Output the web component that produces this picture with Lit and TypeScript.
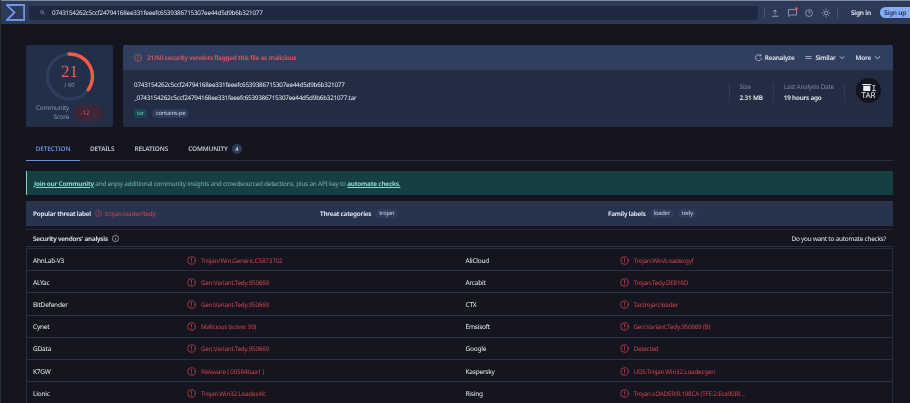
import { LitElement, html, css, svg } from "lit";
import { customElement } from "lit/decorators.js";

const HASH = "0743154262c5ccf24794168ee331feeefc6539386715307ee44d5d9b6b321077";
const ROWS: [string, string, string, string][] = [
  ["AhnLab-V3", "Trojan/Win.Generic.C5873702", "AliCloud", "Trojan:Win/Loader.gyf"],
  ["ALYac", "Gen:Variant.Tedy.950669", "Arcabit", "Trojan.Tedy.DE818D"],
  ["BitDefender", "Gen:Variant.Tedy.950669", "CTX", "Tar.trojan.loader"],
  ["Cynet", "Malicious (score: 99)", "Emsisoft", "Gen:Variant.Tedy.950669 (B)"],
  ["GData", "Gen:Variant.Tedy.950669", "Google", "Detected"],
  ["K7GW", "Riskware ( 00584baa1 )", "Kaspersky", "UDS:Trojan.Win32.Loader.gen"],
  ["Lionic", "Trojan.Win32.Loader.4!c", "Rising", "Trojan.LOADER!8.198CA (TFE:2:Eca90IR…"],
];

const alertIcon = (size: number) => html`<svg class="alert" width=${size} height=${size} viewBox="0 0 16 16" fill="none" stroke="currentColor" stroke-width="1.300" stroke-linecap="round"><circle cx="8" cy="8" r="6.800"/><path d="M8 4.200v4.600M8 11.400v.2"/></svg>`;
const chevron = svg`<path d="M1 1l3.500 3L8 1" fill="none" stroke="currentColor" stroke-width="1"/>`;

@customElement("app-root")
export class AppRoot extends LitElement {
  static styles = css`
    :host { display: block; width: 910px; height: 403px; overflow: hidden; background: #14151f; color: #e9ecf3; font-family: "Noto Sans", sans-serif; font-size: 6.400px; letter-spacing: -0.210px; text-rendering: geometricPrecision; filter: blur(0.3px); box-sizing: border-box; border-left: 1px solid #2a2d38; }
    * { box-sizing: border-box; }
    svg { display: block; flex: none; }
    .topbar { height: 24px; margin-left: -1px; background: #2c3a58; border-top: 1px solid #7f8aa3; display: flex; align-items: center; padding: 0 0 0 6px; }
    .logo { margin-right: 4px; color: #6f93e6; }
    .search { width: 729px; height: 14px; background: #1f2a42; border-radius: 2px; display: flex; align-items: center; padding-left: 11px; gap: 7px; color: #dde1ea; font-size: 6.300px; letter-spacing: -0.220px; }
    .search svg { color: #7e8aa5; }
    .tools { display: flex; align-items: center; flex: 1; color: #b9c2d6; }
    .sep { width: 1px; height: 10px; background: #46547a; }
    .tools .sep:first-child { margin-left: 6px; margin-right: 6px; }
    .ico { margin-right: 8px; position: relative; }
    .ico.comment { margin-left: 1px; }
    .ico.sun { margin-right: 6px; }
    .dot { position: absolute; top: -2px; right: -1px; width: 3.500px; height: 3.500px; border-radius: 50%; background: #e5484d; }
    .signin { margin-left: 13px; font-weight: 600; color: #eef0f6; font-size: 6.500px; }
    .signup { margin-left: auto; width: 30px; height: 11px; background: #86aef5; color: #1d2b4c; border-radius: 6px 0 0 6px; font-weight: 600; display: flex; align-items: center; justify-content: center; font-size: 6.500px; }
    .main { padding: 21px 17px 0 25px; }
    .summary { display: grid; grid-template-columns: 87px 1fr; gap: 10px; height: 82px; }
    .score { background: #232f48; border-radius: 2px; display: flex; flex-direction: column; align-items: center; padding-top: 7px; }
    .gauge { width: 50px; height: 50px; position: relative; }
    .gauge-text { position: absolute; inset: 0; display: flex; flex-direction: column; align-items: center; padding-top: 9.500px; letter-spacing: 0; }
    .num { font-family: "Liberation Serif", serif; font-size: 17px; line-height: 19px; color: #ee5f55; }
    .of { font-size: 5.800px; line-height: 8px; color: #8a94ab; }
    .community { display: flex; align-items: center; margin-top: 2px; gap: 5px; }
    .community-label { text-align: right; color: #8a94ab; line-height: 8.600px; }
    .vote { width: 29px; height: 16px; border-radius: 8px; background: #3d2636; color: #e2524f; display: flex; align-items: center; justify-content: center; gap: 5px; padding-left: 2px; }
    .vote svg { color: #6b4552; }
    .card { background: #222d44; border-radius: 2px; display: flex; flex-direction: column; }
    .card-head { height: 25px; background: #303f60; border-radius: 2px 2px 0 0; display: flex; align-items: center; padding: 0 12px 0 11px; color: #e05a55; font-weight: 600; }
    .card-head .msg { margin-left: 5px; flex: 1; }
    .action { display: flex; align-items: center; gap: 3px; color: #e6e9f1; font-weight: 600; margin-left: 11px; }
    .card-body { flex: 1; display: flex; align-items: flex-start; padding: 8px 12px 0 11px; }
    .names { flex: 1; display: flex; flex-direction: column; line-height: 13px; font-size: 6.300px; letter-spacing: -0.220px; }
    .tags { display: flex; gap: 5px; margin-top: 4.500px; }
    .tag { height: 9px; border-radius: 5px; padding: 0 4px; font-size: 5.800px; line-height: 9px; background: #2e3c5c; color: #d3d9e6; }
    .tag.teal { background: #17474a; color: #5fd0bf; padding: 0 3px; border-radius: 2px; }
    .meta { display: flex; margin-top: 5px; align-items: stretch; }
    .meta-col { border-left: 1px solid #2f3c58; padding: 0 10px; display: flex; flex-direction: column; gap: 2.500px; line-height: 8px; }
    .meta-col span:first-child { color: #7b86a0; }
    .meta-col span:last-child { font-weight: 600; color: #e9ecf3; }
    .meta-col.end { width: 1px; padding: 0; margin-right: 11px; }
    .tar { width: 25px; height: 25px; border-radius: 50%; background: #12141f; display: flex; flex-direction: column; align-items: center; color: #e9ecf3; letter-spacing: 0; }
    .tar svg { margin-top: 6px; }
    .tar span { font-size: 8px; line-height: 8px; margin-top: -0.500px; }
    .tabs { height: 34px; display: flex; align-items: stretch; border-bottom: 1px solid #2a2f42; color: #bfc6d6; font-weight: 600; font-size: 6.400px; letter-spacing: -0.100px; }
    .tab { display: flex; align-items: center; padding-top: 10px; margin-right: 20px; gap: 4px; }
    .tab.on { color: #6c8fdf; width: 54px; justify-content: center; margin-right: 10px; border-bottom: 1px solid #6c8fdf; margin-bottom: -1px; }
    .count { width: 10px; height: 10px; border-radius: 50%; background: #2e3c5c; font-size: 5.600px; display: flex; align-items: center; justify-content: center; color: #d3d9e6; }
    .banner { height: 24px; margin-top: 10px; background: #153f40; border-left: 1px solid #7fd6cb; display: flex; align-items: center; padding-left: 7px; color: #78b3ae; white-space: pre; }
    .banner b { color: #89dcd2; font-weight: 700; text-decoration: underline; }
    .threat { height: 25px; margin-top: 6px; background: #28344d; display: grid; grid-template-columns: 287px 288px 1fr; align-items: center; padding-left: 7px; }
    .threat > div { display: flex; align-items: center; gap: 4px; }
    .threat strong { font-weight: 600; color: #eef0f6; }
    .threat .red { color: #cf454f; display: flex; align-items: center; gap: 3px; }
    .pill { height: 9px; border-radius: 5px; padding: 0 4px; font-size: 5.800px; line-height: 9px; background: #2e3c5c; color: #d3d9e6; }
    .vendors-head { height: 18px; margin-top: 3px; border-top: 1px solid #262b3c; border-bottom: 1px solid #2a2f42; display: flex; align-items: center; padding: 0 7px; font-weight: 600; gap: 4px; }
    .vendors-head .ask { margin-left: auto; font-weight: 400; }
    .table { margin-top: 1px; border: 1px solid #262c3e; border-bottom: 0; }
    .row { height: 22.200px; display: grid; grid-template-columns: 1fr 1fr; border-bottom: 1px solid #2a3146; }
    .half { display: grid; grid-template-columns: 154px 1fr; padding: 1px 0 0 6px; align-items: center; font-size: 6.500px; }
    .half .res { display: flex; align-items: center; gap: 5px; color: #d4434f; font-size: 6.300px; }
    .alert { flex: none; }
  `;

  render() {
    return html`
      <header class="topbar">
        <svg class="logo" width="19" height="17" viewBox="0 0 19 17" fill="none" stroke="currentColor" stroke-width="1.800"><path d="M0.800 1h17.300v15H0.800L8.500 8.500z"/></svg>
        <div class="search">
          <svg width="5" height="5" viewBox="0 0 10 10" fill="none" stroke="currentColor" stroke-width="1.500"><circle cx="4" cy="4" r="3"/><path d="M6.500 6.500L9.500 9.500"/></svg>
          <span>${HASH}</span>
        </div>
        <div class="tools">
          <div class="sep"></div>
          <svg class="ico" width="8" height="8" viewBox="0 0 16 16" fill="none" stroke="currentColor" stroke-width="1.400"><path d="M8 11V2M4.500 5.500L8 2l3.500 3.500M1.500 14.500h13"/></svg>
          <div class="ico comment">
            <svg width="9" height="8" viewBox="0 0 18 16" fill="none" stroke="currentColor" stroke-width="1.300"><path d="M1 1h16v11H5l-4 3z"/></svg>
            <div class="dot"></div>
          </div>
          <svg class="ico" width="8" height="8" viewBox="0 0 16 16" fill="none" stroke="currentColor" stroke-width="1.200"><circle cx="8" cy="8" r="7"/><path d="M6 6.200c0-2.600 4.200-2.600 4.200 0 0 1.700-2.200 1.700-2.200 3.400M8 11.600v.6"/></svg>
          <svg class="ico sun" width="10" height="10" viewBox="0 0 16 16" fill="none" stroke="currentColor" stroke-width="1.100"><circle cx="8" cy="8" r="3"/><path d="M8 1v2M8 13v2M1 8h2M13 8h2M3 3l1.400 1.400M11.600 11.600L13 13M3 13l1.400-1.400M11.600 4.400L13 3"/></svg>
          <div class="sep"></div>
          <span class="signin">Sign in</span>
          <span class="signup">Sign up</span>
        </div>
      </header>
      <main class="main">
        <section class="summary">
          <div class="score">
            <div class="gauge">
              <svg width="50" height="50" viewBox="0 0 50 50" fill="none" stroke-width="3.400">
                <circle cx="25" cy="24.500" r="22.500" stroke="#2f3d5c"/>
                <path d="M24 2A22.500 22.500 0 0 1 43.200 37.700" stroke="#f2594b" stroke-linecap="round"/>
              </svg>
              <div class="gauge-text"><span class="num">21</span><span class="of">/ 60</span></div>
            </div>
            <div class="community">
              <div class="community-label">Community<br />Score</div>
              <div class="vote">-12<svg width="4" height="9" viewBox="0 0 8 18" fill="none" stroke="currentColor" stroke-width="1.200"><path d="M1 6l3-3 3 3M1 12l3 3 3-3"/></svg></div>
            </div>
          </div>
          <div class="card">
            <div class="card-head">
              ${alertIcon(8)}
              <span class="msg">21/60 security vendors flagged this file as malicious</span>
              <span class="action"><svg width="7" height="7" viewBox="0 0 14 14" fill="none" stroke="currentColor" stroke-width="1.200"><path d="M11.500 3.500A6 6 0 1 0 13 8M11.500 .8v3h-3"/></svg>Reanalyze</span>
              <span class="action"><svg width="7" height="5" viewBox="0 0 14 10" fill="none" stroke="currentColor" stroke-width="1.200"><path d="M1 3h12M1 7h12"/></svg>Similar<svg width="6" height="5" viewBox="0 0 9 5">${chevron}</svg></span>
              <span class="action">More<svg width="7" height="5" viewBox="0 0 9 5">${chevron}</svg></span>
            </div>
            <div class="card-body">
              <div class="names">
                <span>${HASH}</span>
                <span>_${HASH}.tar</span>
                <div class="tags"><span class="tag teal">tar</span><span class="tag">contains-pe</span></div>
              </div>
              <div class="meta">
                <div class="meta-col"><span>Size</span><span>2.31 MB</span></div>
                <div class="meta-col"><span>Last Analysis Date</span><span>19 hours ago</span></div>
                <div class="meta-col end"></div>
              </div>
              <div class="tar">
                <svg width="14" height="8" viewBox="0 0 15 9" fill="currentColor"><path d="M0 0h10v1H0zM1 2h8v6H1zM11 1h4v.8h-1.500v5H15v.8h-4v-.8h1.500v-5H11z"/></svg>
                <span>TAR</span>
              </div>
            </div>
          </div>
        </section>
        <nav class="tabs">
          <div class="tab on">DETECTION</div>
          <div class="tab">DETAILS</div>
          <div class="tab">RELATIONS</div>
          <div class="tab">COMMUNITY <span class="count">4</span></div>
        </nav>
        <div class="banner"><b>Join our Community</b> and enjoy additional community insights and crowdsourced detections, plus an API key to <b>automate checks.</b></div>
        <div class="threat">
          <div><strong>Popular threat label</strong><span class="red">${alertIcon(7)}trojan.loader/tedy</span></div>
          <div><strong>Threat categories</strong><span class="pill">trojan</span></div>
          <div><strong>Family labels</strong><span class="pill">loader</span><span class="pill">tedy</span></div>
        </div>
        <div class="vendors-head">
          <span>Security vendors' analysis</span>
          <svg width="7" height="7" viewBox="0 0 16 16" fill="none" stroke="currentColor" stroke-width="1.300"><circle cx="8" cy="8" r="7"/><path d="M8 7v4.500M8 4.500v.4"/></svg>
          <span class="ask">Do you want to automate checks?</span>
        </div>
        <div class="table">
          ${ROWS.map(
            ([a, ar, b, br]) => html`<div class="row">
              <div class="half"><span>${a}</span><span class="res">${alertIcon(9)}${ar}</span></div>
              <div class="half"><span>${b}</span><span class="res">${alertIcon(9)}${br}</span></div>
            </div>`
          )}
        </div>
      </main>
    `;
  }
}
